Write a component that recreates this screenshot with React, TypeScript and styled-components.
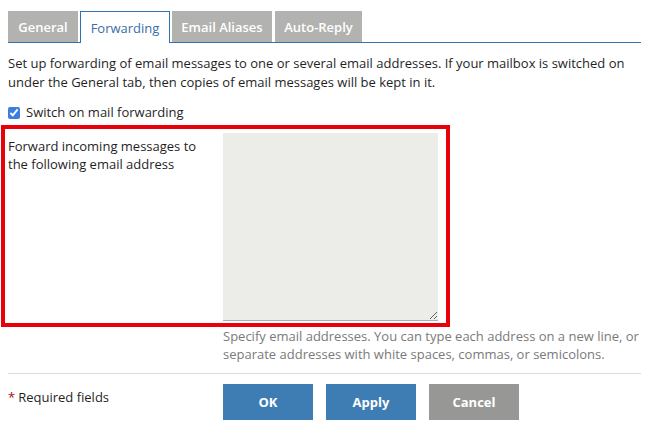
import { FC } from "react";
import styled, { createGlobalStyle } from "styled-components";

const colors = {
    text: "#1f1f1f",
    muted: "#7a7a7a",
    blue: "#3e7cb4",
    tabBlue: "#2f73b3",
    tabGrey: "#b2b3b0",
    cancel: "#979895",
    field: "#ecede9",
    rule: "#dcdcdc",
    red: "#e8000b",
};

const GlobalStyle = createGlobalStyle`
    html, body {
        margin: 0;
        padding: 0;
        background: #fff;
    }
    body {
        font-family: "Open Sans", "Liberation Sans", sans-serif;
        font-size: 13px;
        color: ${colors.text};
    }
`;

const StyledPage = styled.div`
    padding: 11px 14px 0 8px;
`;

const StyledTabBar = styled.div`
    display: flex;
    height: 31px;
    border-bottom: 1px solid ${colors.tabBlue};
`;

const StyledTab = styled.div<{ $active?: boolean; $width: number; $gap: number }>`
    display: flex;
    align-items: center;
    justify-content: center;
    width: ${(p) => p.$width}px;
    margin-right: ${(p) => p.$gap}px;
    font-size: 13px;
    font-weight: ${(p) => (p.$active ? 400 : 600)};
    color: ${(p) => (p.$active ? "#3a6ea6" : "#fff")};
    background: ${(p) => (p.$active ? "#fff" : colors.tabGrey)};
    border: ${(p) => (p.$active ? `1px solid ${colors.tabBlue}` : "none")};
    border-bottom: none;
    margin-bottom: ${(p) => (p.$active ? "-1px" : "0")};
    height: ${(p) => (p.$active ? "32px" : "31px")};
    box-sizing: border-box;
`;

const StyledIntro = styled.p`
    margin: 11px 0 0;
    line-height: 19px;
`;

const StyledCheckRow = styled.label`
    display: flex;
    align-items: center;
    gap: 6px;
    margin-top: 11px;
    line-height: 19px;

    input {
        margin: 0;
        width: 12px;
        height: 12px;
        accent-color: #3b7de0;
    }
`;

const StyledHighlight = styled.div`
    display: grid;
    grid-template-columns: 215px 215px;
    margin: 3px -3px 0 -7px;
    width: 438px;
    padding: 4px 0 2px 3px;
    border: 4px solid ${colors.red};
`;

const StyledLabel = styled.div`
    line-height: 18px;
    padding-top: 4px;
`;

const StyledTextArea = styled.textarea`
    height: 188px;
    box-sizing: border-box;
    border: none;
    border-bottom: 1px solid #a7adb3;
    background: ${colors.field};
    resize: vertical;
    font: inherit;
    margin: 0;
`;

const StyledHelp = styled.div`
    margin-left: 215px;
    color: ${colors.muted};
    line-height: 18px;
`;

const StyledFooter = styled.div`
    display: grid;
    grid-template-columns: 215px 1fr;
    margin-top: 10px;
    padding-top: 10px;
    border-top: 1px solid ${colors.rule};
`;

const StyledRequired = styled.div`
    padding-top: 4px;
    line-height: 18px;

    span {
        color: #b8000b;
        margin-right: 3px;
    }
`;

const StyledButtons = styled.div`
    display: flex;
    gap: 13px;
`;

const StyledButton = styled.button<{ $grey?: boolean }>`
    width: 90px;
    height: 36px;
    border: none;
    margin: 0;
    background: ${(p) => (p.$grey ? colors.cancel : colors.blue)};
    color: #fff;
    font-family: "Open Sans", "Liberation Sans", sans-serif;
    font-size: 13px;
    font-weight: 700;
    cursor: pointer;
`;

const tabs = [
    { label: "General", width: 70, gap: 2 },
    { label: "Forwarding", width: 90, gap: 2 },
    { label: "Email Aliases", width: 100, gap: 3 },
    { label: "Auto-Reply", width: 87, gap: 0 },
];

const App: FC = () => {
    return (
        <>
            <GlobalStyle />
            <StyledPage>
                <StyledTabBar>
                    {tabs.map((tab) => (
                        <StyledTab
                            key={tab.label}
                            $active={tab.label === "Forwarding"}
                            $width={tab.width}
                            $gap={tab.gap}
                        >
                            {tab.label}
                        </StyledTab>
                    ))}
                </StyledTabBar>
                <StyledIntro>
                    Set up forwarding of email messages to one or several email
                    addresses. If your mailbox is switched on under the General
                    tab, then copies of email messages will be kept in it.
                </StyledIntro>
                <StyledCheckRow>
                    <input type="checkbox" defaultChecked />
                    Switch on mail forwarding
                </StyledCheckRow>
                <StyledHighlight>
                    <StyledLabel>
                        Forward incoming messages to
                        <br />
                        the following email address
                    </StyledLabel>
                    <StyledTextArea />
                </StyledHighlight>
                <StyledHelp>
                    Specify email addresses. You can type each address on a new
                    line, or
                    <br />
                    separate addresses with white spaces, commas, or semicolons.
                </StyledHelp>
                <StyledFooter>
                    <StyledRequired>
                        <span>*</span>Required fields
                    </StyledRequired>
                    <StyledButtons>
                        <StyledButton>OK</StyledButton>
                        <StyledButton>Apply</StyledButton>
                        <StyledButton $grey>Cancel</StyledButton>
                    </StyledButtons>
                </StyledFooter>
            </StyledPage>
        </>
    );
};

export default App;
